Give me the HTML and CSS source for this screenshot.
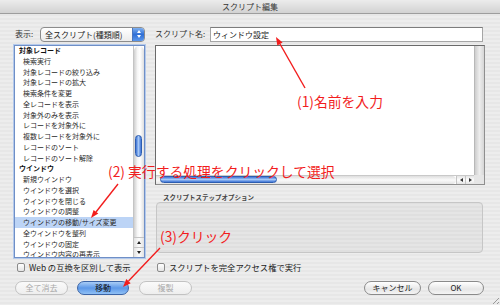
FILE: index.html
```html
<!DOCTYPE html>
<html lang="ja">
<head>
    <meta charset="UTF-8">
    <title>スクリプト編集</title>
    <link rel="stylesheet" href="styles.css">
</head>
<body>
    <div class="titlebar">スクリプト編集</div>

    <div class="main">
        <div class="field">
            <span class="label show-label">表示:</span>
            <div class="popup">
                <span class="popup-text">全スクリプト(種類順)</span>
                <span class="popup-arrows"><i class="tri up white"></i><i class="tri down white"></i></span>
            </div>
        </div>
        <div class="field">
            <span class="label name-label">スクリプト名:</span>
            <div class="name-input">ウィンドウ設定</div>
        </div>

        <div class="step-list">
            <div class="items">
                <div class="item head">対象レコード</div>
                <div class="item">検索実行</div>
                <div class="item">対象レコードの絞り込み</div>
                <div class="item">対象レコードの拡大</div>
                <div class="item">検索条件を変更</div>
                <div class="item">全レコードを表示</div>
                <div class="item">対象外のみを表示</div>
                <div class="item">レコードを対象外に</div>
                <div class="item">複数レコードを対象外に</div>
                <div class="item">レコードのソート</div>
                <div class="item">レコードのソート解除</div>
                <div class="item head">ウインドウ</div>
                <div class="item">新規ウインドウ</div>
                <div class="item">ウインドウを選択</div>
                <div class="item">ウインドウを閉じる</div>
                <div class="item">ウインドウの調整</div>
                <div class="item selected">ウインドウの移動/サイズ変更</div>
                <div class="item">全ウインドウを整列</div>
                <div class="item">ウインドウの固定</div>
                <div class="item">ウインドウ内容の再表示</div>
            </div>
            <div class="list-scroll">
                <div class="list-track"><div class="list-thumb"></div></div>
                <div class="list-arrow"><i class="tri up"></i></div>
                <div class="list-arrow"><i class="tri down"></i></div>
            </div>
        </div>

        <div class="right-col">
            <div class="script-box">
                <div class="script-text"></div>
                <div class="vscroll"></div>
                <div class="hscroll">
                    <div class="htrack"><div class="hthumb"></div></div>
                    <div class="harrow"><i class="tri left"></i></div>
                    <div class="harrow"><i class="tri right"></i></div>
                </div>
                <div class="corner"></div>
            </div>
            <div class="group-label">スクリプトステップオプション</div>
            <div class="group-box"></div>
        </div>

        <label class="check check-left"><span class="box"></span>Web の互換を区別して表示</label>
        <label class="check check-right"><span class="box"></span>スクリプトを完全アクセス権で実行</label>

        <div class="buttons">
            <div class="btn disabled clear-btn">全て消去</div>
            <div class="btn default move-btn">移動</div>
            <div class="btn disabled copy-btn">複製</div>
            <div class="btn cancel-btn">キャンセル</div>
            <div class="btn ok-btn">OK</div>
        </div>
    </div>

    <div class="grip"></div>

    <!-- red annotations drawn over the dialog -->
    <div class="note note1">(1)名前を入力</div>
    <div class="note note2">(2) 実行する処理をクリックして選択</div>
    <div class="note note3">(3)クリック</div>
    <svg class="arrows" width="500" height="305" viewBox="0 0 500 305">
        <g stroke="#f21d1d" stroke-width="1.4" fill="none">
            <line x1="305" y1="88" x2="280" y2="44"/>
            <line x1="118" y1="184" x2="96" y2="212"/>
            <line x1="160" y1="248" x2="128.5" y2="281"/>
        </g>
        <g fill="#f21d1d">
            <polygon points="276,37 282.6,42.5 277.3,45.4"/>
            <polygon points="91,218 98.3,213.6 93.6,209.9"/>
            <polygon points="123,287 130.7,283.3 126.3,279.1"/>
        </g>
    </svg>
</body>
</html>
```

FILE: styles.css
```css
* {
    margin: 0;
    padding: 0;
    box-sizing: border-box;
}

body {
    position: relative;
    width: 500px;
    height: 305px;
    overflow: hidden;
    font-family: "Noto Sans CJK JP", sans-serif;
    font-size: 8px;
    color: #222;
    background: repeating-linear-gradient(#ededed 0 2px, #e7e7e7 2px 4px);
}

.titlebar {
    height: 14px;
    line-height: 13px;
    text-align: center;
    font-size: 8px;
    color: #333;
    background: linear-gradient(#ececec, #d2d2d2);
    border-bottom: 1px solid #9d9d9d;
}

.main {
    display: grid;
    grid-template-columns: 131px 330px;
    column-gap: 10px;
    padding: 12px 15px 0 14px;
}

.field {
    display: flex;
    align-items: center;
    height: 16px;
    margin-bottom: 3px;
}

.label {
    font-size: 8px;
    line-height: 16px;
    color: #333;
}

.show-label {
    width: 26px;
    padding-left: 1px;
}

.name-label {
    width: 55px;
}

.popup {
    display: flex;
    width: 105px;
    height: 15px;
    border: 1px solid #8c8c8c;
    border-radius: 4px;
    background: linear-gradient(#ffffff, #ececec);
    overflow: hidden;
}

.popup-text {
    flex: 1;
    padding-left: 4px;
    line-height: 13px;
    font-size: 8px;
}

.popup-arrows {
    display: flex;
    flex-direction: column;
    align-items: center;
    justify-content: center;
    gap: 2px;
    width: 12px;
    background: linear-gradient(#7fb0f0, #2f6fd6 50%, #5b97ec);
    border-left: 1px solid #4a76be;
}

.name-input {
    width: 273px;
    height: 15px;
    line-height: 13px;
    padding-left: 2px;
    font-size: 8px;
    background: #fff;
    border: 1px solid #a5a5a5;
    border-top-color: #7c7c7c;
}

.tri {
    display: block;
    width: 0;
    height: 0;
    border: 2.5px solid transparent;
}

.tri.up { border-bottom: 3px solid #222; border-top-width: 0; }
.tri.down { border-top: 3px solid #222; border-bottom-width: 0; }
.tri.left { border-right: 3px solid #333; border-left-width: 0; }
.tri.right { border-left: 3px solid #333; border-right-width: 0; }
.tri.white.up { border-bottom-color: #fff; }
.tri.white.down { border-top-color: #fff; }

.step-list {
    display: flex;
    height: 213px;
    background: #fff;
    border: 1px solid #6f8fc6;
    box-shadow: 0 0 0 1px #b3c9ec;
}

.items {
    flex: 1;
    overflow: hidden;
}

.item {
    height: 10.75px;
    line-height: 10.75px;
    padding-left: 8px;
    font-size: 7px;
    color: #2a2a2a;
    white-space: nowrap;
}

.item:first-child {
    margin-top: -1px;
}

.item.head {
    padding-left: 4px;
    font-weight: bold;
    color: #111;
}

.item.selected {
    background: #bcd4f6;
}

.list-scroll {
    display: flex;
    flex-direction: column;
    width: 11px;
    border-left: 1px solid #c4c4c4;
}

.list-track {
    flex: 1;
    border-radius: 5px 5px 0 0;
    background: linear-gradient(to right, #cfcfcf, #f6f6f6 35%, #ffffff 60%, #dedede);
}

.list-thumb {
    width: 7px;
    height: 22px;
    margin: 89px 0 0 1px;
    border: 1px solid #2d5db0;
    border-radius: 4px;
    background: linear-gradient(to right, #3e74d6, #a5c8f7 50%, #3e74d6);
}

.list-arrow {
    display: flex;
    align-items: center;
    justify-content: center;
    height: 10px;
    border-top: 1px solid #c4c4c4;
    background: linear-gradient(to right, #e2e2e2, #fdfdfd 50%, #e2e2e2);
}

.right-col {
    display: flex;
    flex-direction: column;
}

.script-box {
    display: grid;
    grid-template-columns: 1fr 10px;
    grid-template-rows: 1fr 9px;
    height: 140px;
    border: 1px solid #6a6a6a;
    border-right-color: #8f8f8f;
    border-bottom-color: #8f8f8f;
    background: #fff;
}

.vscroll {
    background: linear-gradient(to right, #cdcdcd, #ededed 50%, #d6d6d6);
    border-left: 1px solid #b8b8b8;
}

.hscroll {
    display: flex;
    border-top: 1px solid #c9c9c9;
}

.htrack {
    flex: 1;
    padding-left: 4px;
    border-radius: 0 4px 4px 0;
    background: linear-gradient(#dedede, #fafafa 50%, #e4e4e4);
}

.hthumb {
    width: 117px;
    height: 7px;
    border: 1px solid #2d5db0;
    border-radius: 4px;
    background: linear-gradient(#3e74d6, #a5c8f7 50%, #3e74d6);
}

.harrow {
    display: flex;
    align-items: center;
    justify-content: center;
    width: 9px;
    border-left: 1px solid #c4c4c4;
    background: linear-gradient(#e4e4e4, #fdfdfd 50%, #e4e4e4);
}

.corner {
    background: #e6e6e6;
}

.group-label {
    height: 9px;
    margin: 8px 0 0 8px;
    font-size: 6.5px;
    line-height: 9px;
    font-weight: bold;
    color: #444;
}

.group-box {
    width: 327px;
    height: 51px;
    margin-left: 1px;
    border: 1px solid #c6c6c6;
    border-radius: 4px;
    background: rgba(0, 0, 0, 0.03);
}

.check {
    display: flex;
    align-items: center;
    gap: 4px;
    height: 10px;
    margin-top: 4px;
    font-size: 8.3px;
    color: #222;
}

.check-left {
    padding-left: 3px;
}

.check-right {
    padding-left: 2px;
}

.box {
    width: 8px;
    height: 9px;
    border: 1px solid #8a8a8a;
    border-radius: 2px;
    background: linear-gradient(#ffffff, #e4e4e4);
}

.buttons {
    grid-column: 1 / -1;
    display: flex;
    margin-top: 9px;
}

.btn {
    height: 14px;
    line-height: 12px;
    text-align: center;
    font-size: 8px;
    border: 1px solid #8a8a8a;
    border-radius: 7px;
    background: linear-gradient(#ffffff, #e6e6e6 60%, #f4f4f4);
    color: #222;
}

.btn.disabled {
    border-color: #c2c2c2;
    color: #a9a9a9;
    background: linear-gradient(#fafafa, #eeeeee);
}

.btn.default {
    border-color: #3b64a6;
    background: linear-gradient(#a9cdf7, #5d98e8 50%, #8fc0f5);
    color: #111;
}

.clear-btn { width: 53px; margin-left: 1px; }
.move-btn { width: 52px; margin-left: 9px; }
.copy-btn { width: 53px; margin-left: 10px; }
.cancel-btn { width: 57px; margin-left: auto; }
.ok-btn { width: 56px; margin-left: 7px; margin-right: 1px; }

.grip {
    position: absolute;
    right: 1px;
    bottom: 1px;
    width: 9px;
    height: 9px;
    background: repeating-linear-gradient(135deg, transparent 0 2px, #9a9a9a 2px 3px);
    clip-path: polygon(100% 0, 100% 100%, 0 100%);
}

.note {
    position: absolute;
    font-size: 13.8px;
    line-height: 15px;
    color: #f21d1d;
    white-space: nowrap;
}

.note1 { left: 297px; top: 94px; }
.note2 { left: 108px; top: 164px; }
.note3 { left: 160px; top: 229px; }

.arrows {
    position: absolute;
    left: 0;
    top: 0;
}
```
